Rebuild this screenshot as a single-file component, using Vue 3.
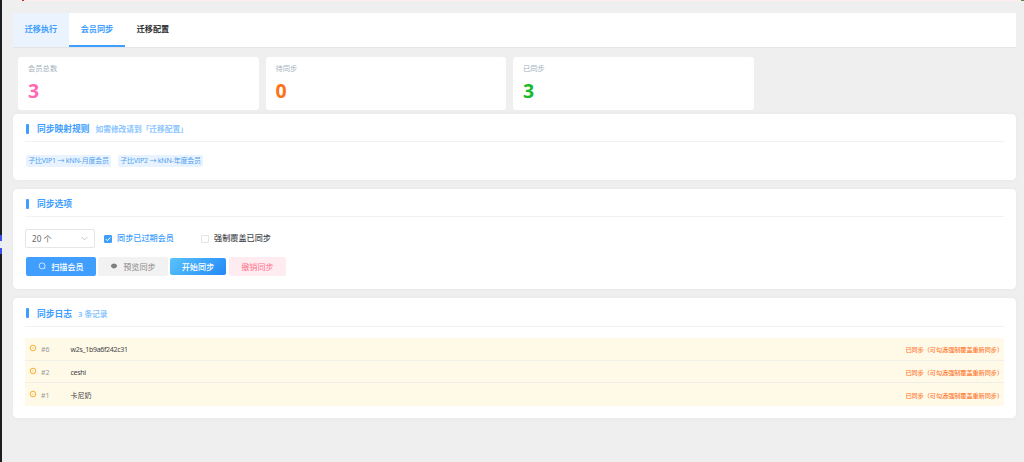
<script setup>
import { ref } from 'vue'

const tabs = [
  { key: 'run', label: '迁移执行' },
  { key: 'member', label: '会员同步' },
  { key: 'config', label: '迁移配置' },
]
const activeTab = ref('member')
const hoverTab = ref('run')

const stats = [
  { label: '会员总数', value: 3, type: 'pink' },
  { label: '待同步', value: 0, type: 'orange' },
  { label: '已同步', value: 3, type: 'green' },
]

const rules = ['子比VIP1 → kNN-月度会员', '子比VIP2 → kNN-年度会员']

const syncExpired = ref(true)
const forceCover = ref(false)

const logs = [
  { id: 6, name: 'w2s_1b9a6f242c31' },
  { id: 2, name: 'ceshi' },
  { id: 1, name: '卡尼奶' },
]
</script>

<template>
  <div class="page">
    <!-- 左侧折叠菜单边缘 -->
    <div class="side-edge"><span class="side-handle"></span></div>
    <div class="top-notice"></div>
    <div class="top-corner"></div>

    <div class="tabs">
      <div
        v-for="tab in tabs"
        :key="tab.key"
        class="tab"
        :class="{ active: activeTab === tab.key, hover: hoverTab === tab.key }"
        @click="activeTab = tab.key"
      >{{ tab.label }}</div>
    </div>

    <div class="stats">
      <div v-for="item in stats" :key="item.label" class="stat">
        <div class="stat-label">{{ item.label }}</div>
        <div class="stat-value" :class="item.type">{{ item.value }}</div>
      </div>
    </div>

    <div class="card card-rules">
      <div class="card-title">同步映射规则<small>如需修改请到「迁移配置」</small></div>
      <div class="tags">
        <span v-for="rule in rules" :key="rule" class="tag">{{ rule }}</span>
      </div>
    </div>

    <div class="card card-options">
      <div class="card-title">同步选项</div>
      <div class="options">
        <div class="select">
          <span>20 个</span>
          <svg width="7" height="5" viewBox="0 0 7 5"><path d="M0.5 0.8L3.5 3.8L6.5 0.8" fill="none" stroke="#b4b8bf" stroke-width="0.8" /></svg>
        </div>
        <div class="check check-first" :class="{ checked: syncExpired }" @click="syncExpired = !syncExpired">
          <span class="box"><svg v-if="syncExpired" width="8" height="8" viewBox="0 0 8 8"><path d="M1.8 4.1L3.4 5.7L6.3 2.4" fill="none" stroke="#fff" stroke-width="1" /></svg></span>
          <span class="check-text">同步已过期会员</span>
        </div>
        <div class="check" :class="{ checked: forceCover }" @click="forceCover = !forceCover">
          <span class="box"></span>
          <span class="check-text">强制覆盖已同步</span>
        </div>
      </div>
      <div class="buttons">
        <button class="btn primary">
          <svg width="8" height="8" viewBox="0 0 8 8"><circle cx="4.1" cy="3.9" r="3" fill="none" stroke="#fff" stroke-width="0.7" /><path d="M6.2 6L7.2 7" stroke="#fff" stroke-width="0.7" /></svg>
          扫描会员
        </button>
        <button class="btn gray">
          <svg width="8" height="8" viewBox="0 0 8 8"><path d="M0.8 4C2 0.8 6 0.8 7.2 4C6 7.2 2 7.2 0.8 4Z" fill="#808080" /></svg>
          预览同步
        </button>
        <button class="btn gradient">开始同步</button>
        <button class="btn danger">撤销同步</button>
      </div>
    </div>

    <div class="card card-logs">
      <div class="card-title">同步日志<small>3 条记录</small></div>
      <div class="logs">
        <div v-for="log in logs" :key="log.id" class="log">
          <svg class="log-icon" width="8" height="8" viewBox="0 0 8 8"><circle cx="4" cy="4" r="2.8" fill="none" stroke="#f9ae30" stroke-width="1" /><path d="M3 4H5" stroke="#f7b03c" stroke-width="0.6" /></svg>
          <span class="log-id">#{{ log.id }}</span>
          <span class="log-name">{{ log.name }}</span>
          <span class="log-msg">已同步（可勾选强制覆盖重新同步）</span>
        </div>
      </div>
    </div>
  </div>
</template>

<style>
body {
  margin: 0;
  background: #efefef;
}
</style>

<style scoped>
.page {
  position: relative;
  box-sizing: border-box;
  width: 1024px;
  height: 462px;
  padding: 13px 8px 0 13px;
  overflow: hidden;
  background: #efefef;
  font-family: "Noto Sans", "Noto Sans CJK SC", sans-serif;
  font-size: 8.15px;
  color: #303133;
}

.side-edge {
  position: absolute;
  left: 0;
  top: 0;
  width: 2px;
  height: 100%;
  background: #1d1e22;
}

.side-handle {
  position: absolute;
  left: 0;
  top: 235px;
  width: 2px;
  height: 7px;
  background: #e8ebf5;
  border-top: 6px solid #3c50f0;
  border-bottom: 6px solid #3c50f0;
}

.top-notice {
  position: absolute;
  left: 22px;
  top: 0;
  width: 996px;
  height: 1px;
  background: #ffecec;
  border-left: 2px solid #d8232a;
}

.top-corner {
  position: absolute;
  right: 0;
  top: 0;
  width: 3px;
  height: 1px;
  background: #66834f;
}

/* 顶部标签 */
.tabs {
  display: flex;
  width: 1003px;
  height: 34px;
  background: #fff;
  border-bottom: 1px solid #e3e5e8;
}

.tab {
  box-sizing: border-box;
  width: 56px;
  height: 34px;
  line-height: 32px;
  text-align: center;
  font-weight: 700;
}

.tab.hover {
  background: #ebf3ff;
  color: #409eff;
}

.tab.active {
  color: #409eff;
  line-height: 32px;
  border-bottom: 2px solid #409eff;
}

/* 统计卡片 */
.stats {
  display: flex;
  gap: 7px;
  margin: 9px 0 4px 5px;
}

.stat {
  box-sizing: border-box;
  width: 240.5px;
  height: 53px;
  padding: 6px 10px 0;
  background: #fff;
  border-radius: 3px;
}

.stat-label {
  height: 12px;
  line-height: 11px;
  font-size: 7.3px;
  color: #a4b0bd;
}

.stat-value {
  line-height: 32px;
  font-size: 19.5px;
  font-weight: 700;
}

.pink { color: #ff69b4; }
.orange { color: #ff7214; }
.green { color: #18b92b; }

/* 内容卡片 */
.card {
  box-sizing: border-box;
  width: 1003px;
  margin-bottom: 9px;
  padding: 0 12px;
  background: #fff;
  border-radius: 4.5px;
  box-shadow: 0 0 5px rgba(0, 0, 0, 0.04);
}

.card-rules { height: 66px; }
.card-options { height: 100px; }
.card-logs { height: 120px; }

.card-title {
  box-sizing: border-box;
  display: flex;
  align-items: center;
  height: 28px;
  padding-top: 2px;
  border-bottom: 1px solid #f2f2f2;
  font-size: 8.75px;
  font-weight: 700;
  color: #409eff;
}

.card-title::before {
  content: "";
  width: 3px;
  height: 10px;
  margin: 0 8px 0 1px;
  border-radius: 1px;
  background: #409eff;
}

.card-title small {
  margin-left: 6px;
  font-size: 7.7px;
  color: #8cc5ff;
}

.card-logs .card-title {
  height: 29px;
}

.tags {
  display: flex;
  gap: 7px;
  margin: 13px 0 0 1px;
}

.tag {
  box-sizing: border-box;
  width: 85px;
  height: 12px;
  border-radius: 2px;
  background: #e8f3ff;
  color: #509fee;
  font-size: 7px;
  letter-spacing: -0.2px;
  line-height: 12px;
  text-align: center;
  white-space: nowrap;
}

.options {
  display: flex;
  align-items: center;
  margin-top: 12px;
}

.select {
  box-sizing: border-box;
  display: flex;
  align-items: center;
  justify-content: space-between;
  width: 70px;
  height: 19px;
  margin-right: 9px;
  padding: 0 6px;
  border: 1px solid #e6e6e6;
  border-radius: 2px;
  color: #666;
}

.check {
  display: flex;
  align-items: center;
  color: #4a4c50;
  white-space: nowrap;
  font-weight: 500;
}

.check-text {
  padding-bottom: 2px;
}

.check-first { width: 97px; }
.check.checked { color: #409eff; }

.box {
  box-sizing: border-box;
  width: 8px;
  height: 8px;
  margin-right: 5px;
  border: 1px solid #e3e4e8;
  border-radius: 1px;
}

.box svg {
  display: block;
  margin: -1px;
}

.checked .box {
  border-color: #409eff;
  background: #409eff;
}

.buttons {
  display: flex;
  align-items: center;
  gap: 2px;
  margin: 9px 0 0 1px;
}

.btn {
  display: flex;
  align-items: center;
  justify-content: center;
  gap: 5px;
  width: 70px;
  height: 19px;
  padding: 0;
  border: 0;
  border-radius: 2px;
  font-family: inherit;
  font-size: 8.15px;
  white-space: nowrap;
  color: #fff;
}

.btn svg {
  margin-bottom: 2px;
}

.primary { background: #409eff; font-weight: 500; }
.gray { background: #f2f2f2; color: #888; }
.gradient {
  width: 56px;
  height: 17px;
  background: linear-gradient(135deg, #59c3fb, #2389f7);
  font-weight: 500;
}
.danger {
  width: 57px;
  margin-left: 1px;
  background: #ffecf0;
  color: #ff708b;
}

/* 同步日志 */
.logs {
  margin-top: 11px;
}

.log {
  box-sizing: border-box;
  display: flex;
  align-items: center;
  height: 22.7px;
  padding: 1px 1px 0 4px;
  background: #fffae8;
  border-bottom: 1px solid #f0eee8;
  font-size: 7px;
}

.log:last-child { border-bottom: 0; }

.log-icon {
  margin-bottom: 2px;
}

.log-id {
  width: 29.5px;
  margin-left: 4px;
  color: #999;
}

.log-name {
  flex: 1;
  letter-spacing: -0.3px;
  color: #444;
}

.log:last-child .log-name {
  letter-spacing: 0;
}

.log-msg {
  font-size: 6.1px;
  font-weight: 500;
  color: #ff7830;
}
</style>
